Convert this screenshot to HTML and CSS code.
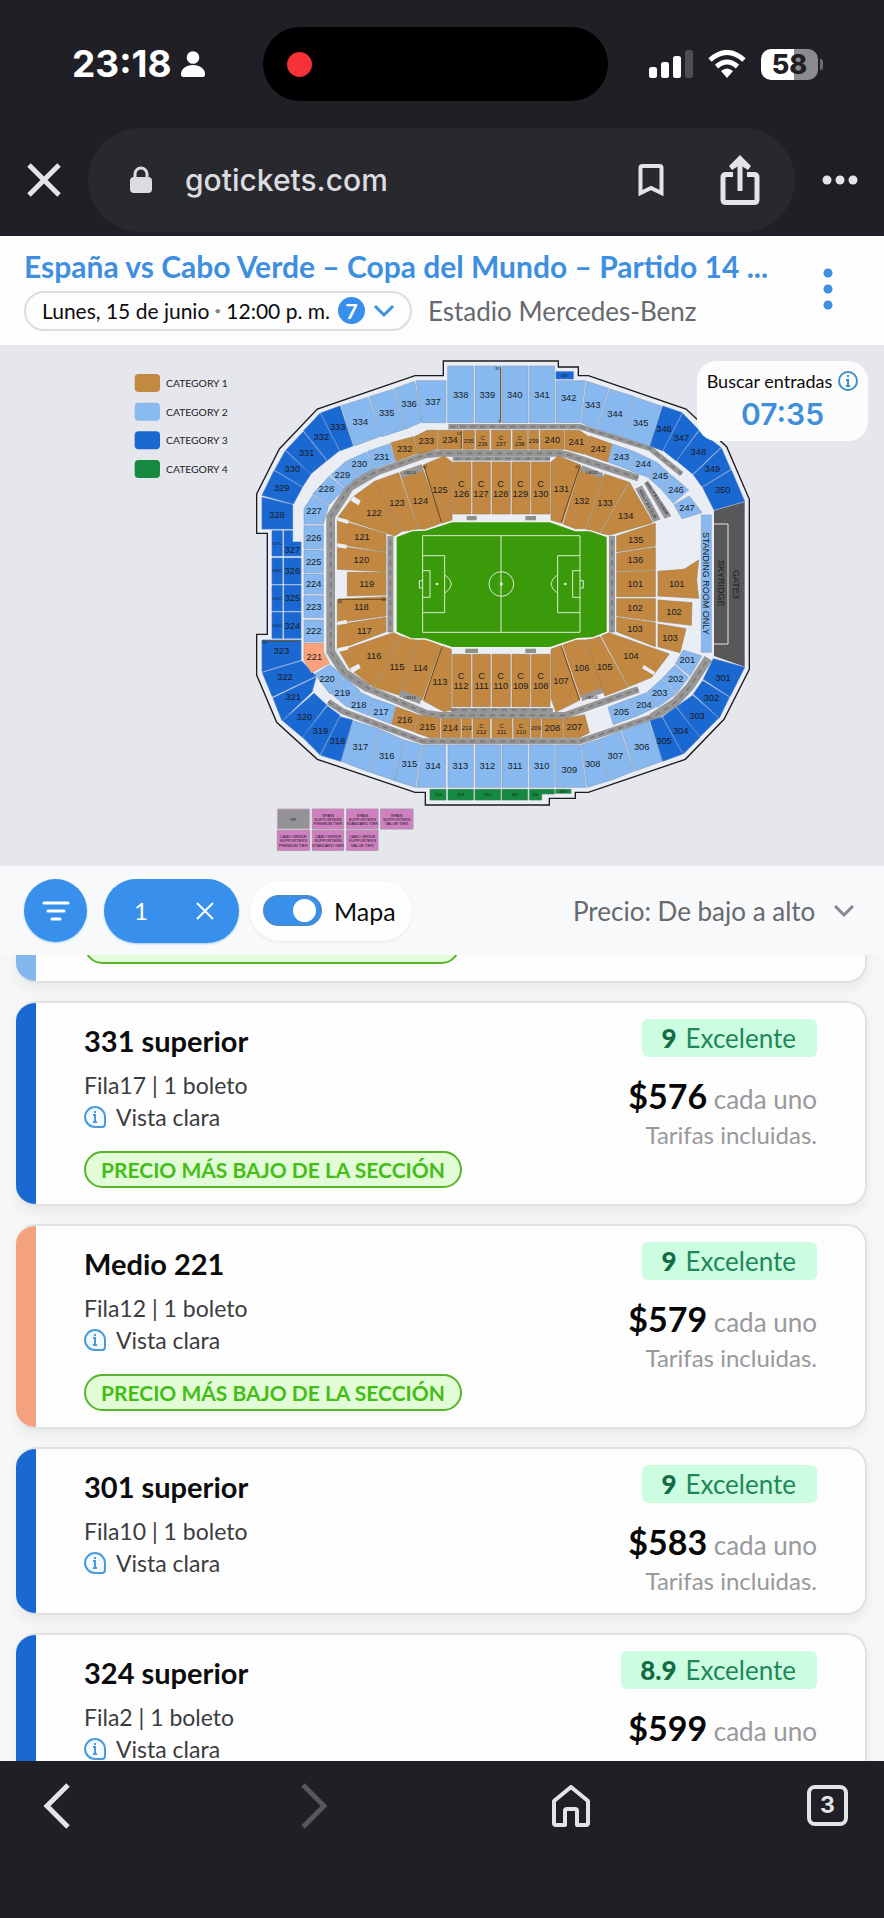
FILE: index.html
```html
<!DOCTYPE html>
<html lang="es">
<head>
<meta charset="utf-8">
<meta name="viewport" content="width=device-width, initial-scale=1">
<title>España vs Cabo Verde</title>
<link rel="stylesheet" href="styles.css">
</head>
<body>
<header class="chrome">
  <div class="status">
    <div class="status-left">
      <span class="clock">23:18</span>
      <svg width="24" height="26" viewBox="0 0 24 26" fill="#fff"><circle cx="12" cy="6.500" r="6.300"/><path d="M0 23c0-5 5-9 12-9s12 4 12 9q0 3-2 3H2q-2 0-2-3z"/></svg>
    </div>
    <div class="island"><span class="rec"></span></div>
    <div class="status-right">
      <svg width="44" height="28" viewBox="0 0 44 28" fill="#fff"><rect y="17" width="8" height="11" rx="2.500"/><rect x="12" y="12" width="8" height="16" rx="2.500"/><rect x="24" y="6" width="8" height="22" rx="2.500"/><rect x="36" width="8" height="28" rx="2.500" fill="#4d4d53"/></svg>
      <svg width="38" height="28" viewBox="0 0 38 28" fill="none" stroke="#fff" stroke-width="5"><path d="M2 10Q19-5 36 10M8.500 16.500q10.500-9 21 0"/><path d="M13 21q6-5 12 0l-6 7z" fill="#fff" stroke="none"/></svg>
      <div class="battery"><span class="battery-level">58</span></div>
    </div>
  </div>
  <div class="address">
    <button class="icon-btn" aria-label="Cerrar"><svg width="34" height="34" viewBox="0 0 34 34" stroke="#e4e4e6" stroke-width="5"><path d="M2 2l30 30M32 2L2 32"/></svg></button>
    <div class="url-pill">
      <svg width="22" height="28" viewBox="0 0 22 28"><rect y="11" width="22" height="16" rx="4" fill="#dcdcdf"/><path d="M5 13V8a6 6 0 0 1 12 0v5" fill="none" stroke="#dcdcdf" stroke-width="3"/></svg>
      <span class="url">gotickets.com</span>
      <button class="icon-btn" aria-label="Guardar"><svg width="26" height="34" viewBox="0 0 26 34" fill="none" stroke="#e4e4e6" stroke-width="4"><path d="M2.500 30V5q0-2 2-2h17q2 0 2 2v25L13 25z"/></svg></button>
      <button class="icon-btn" aria-label="Compartir"><svg width="40" height="50" viewBox="0 0 40 50" fill="none" stroke="#e4e4e6" stroke-width="5"><path d="M13 19.500H6q-3 0-3 3v22q0 3 3 3h28q3 0 3-3v-22q0-3-3-3h-7M20 36V8"/><path d="M20 0l11 11-3 4-8-5-8 5-3-4z" fill="#e4e4e6" stroke="none"/></svg></button>
    </div>
    <button class="icon-btn" aria-label="Más"><svg width="36" height="10" viewBox="0 0 36 10" fill="#e4e4e6"><circle cx="5" cy="5" r="4.500"/><circle cx="18" cy="5" r="4.500"/><circle cx="31" cy="5" r="4.500"/></svg></button>
  </div>
</header>

<section class="event">
  <div class="event-text">
    <h1 class="event-title">España vs Cabo Verde – Copa del Mundo – Partido 14 ...</h1>
    <div class="event-meta">
      <button class="date-pill">Lunes, 15 de junio <span class="sep">•</span> 12:00 p. m. <span class="count">7</span>
        <svg width="22" height="14" viewBox="0 0 22 14" fill="none" stroke="#3f8fdf" stroke-width="3"><path d="M2 2l9 9 9-9"/></svg>
      </button>
      <span class="venue">Estadio Mercedes-Benz</span>
    </div>
  </div>
  <button class="icon-btn" aria-label="Opciones"><svg width="10" height="42" viewBox="0 0 10 42" fill="#3f8fdf"><circle cx="5" cy="5" r="4.500"/><circle cx="5" cy="21" r="4.500"/><circle cx="5" cy="37" r="4.500"/></svg></button>
</section>

<section class="map">
<svg class="map-svg" viewBox="0 0 2652 1563">
  <g class="legend">
    <rect x="404" y="87" width="76" height="54" rx="12" fill="#c28943"/><text x="498" y="126">CATEGORY 1</text>
    <rect x="404" y="173" width="76" height="54" rx="12" fill="#88b9ef"/><text x="498" y="212">CATEGORY 2</text>
    <rect x="404" y="259" width="76" height="54" rx="12" fill="#1b68d1"/><text x="498" y="298">CATEGORY 3</text>
    <rect x="404" y="345" width="76" height="54" rx="12" fill="#168a41"/><text x="498" y="384">CATEGORY 4</text>
  </g>
  <g transform="translate(720 -15)">
    <path d="M610 63H955V81H1015V107H1045L1338 207 1460 320 1528 478V988L1452 1138 1336 1258 1045 1357H1006V1375H928V1395H556V1357H525L232 1258 110 1147 50 1005V883H82V580H50V462L118 327 232 207 525 107H610Z" fill="#eaedf4" stroke="#1b1b1e" stroke-width="4"/>
    <!-- concourses -->
    <g class="walk">
      <path stroke-width="16" d="M625 260H1020L1230 325 1325 402"/>
      <path stroke-width="20" d="M1195 414L985 345 960 340H600L555 345 400 400"/>
      <path stroke-width="26" d="M410 394L330 440 272 530V935L312 998 385 1045"/>
      <path stroke-width="20" d="M375 1042L560 1120 600 1126H975L1195 1048"/>
      <path stroke-width="12" d="M638 356H930M632 1110H938"/>
      <path stroke-width="18" d="M265 1085L310 1115 548 1204H1020L1240 1130"/>
      <path stroke-width="26" d="M1236 1132L1305 1088 1350 1040 1405 955"/>
      <path stroke-width="18" d="M451 588V877M1116 588V877"/>
    </g>
    <g class="walk-marks">
      <path d="M630 260H1020L1230 325 1325 402M1195 414L985 345 960 340H600L555 345 400 400 330 440 272 530V935L312 998 385 1045 560 1120 600 1126H975L1195 1048"/>
      <path d="M645 356H930M635 1110H938M265 1085L310 1115 548 1204H1020L1240 1130 1305 1088 1350 1040 1405 955M451 600V877M1116 600V877"/>
    </g>
    <!-- category 2 -->
    <g class="c2">
      <path d="M623 78h77v170h-77zM705 78h77v170h-77zM786 78h78v170h-78zM868 78h76v170h-76zM528 122h90v126h-72zM462 146l62-22 21 122-49 22zM388 170l71-22 35 120-68 22zM304 197l80-25 40 116-82 30z"/>
      <path d="M948 122h88l-16 126h-72zM1040 124l66 21-38 123-45-20zM1109 147l75 23-40 120-73-22zM1186 172l78 26-36 120-82-28z"/>
      <path d="M1118 312l66 23-16 55-64-24zM1186 336l66 32-27 44-55-20zM1254 370l42 38-34 38-36-32zM1298 408l48 42-46 40-36-42zM1348 468l38 50-60 18-24-42z"/>
      <path d="M383 334l67-23 16 53-66 24zM320 363l60-27 18 52-40 20zM272 405l46-41 38 44-42 36zM218 462l50-54 44 38-44 48zM218 466l48 30-16 56h-58v-46zM192 557h58v69h-58zM192 630h58v68h-58zM192 702h58v60h-58zM192 767h58v66h-58zM192 840h58v66h-58z"/>
      <path d="M224 1002l46-28 44 38-44 50zM272 1060l44-46 44 38-40 48zM322 1100l38-44 38 19-14 51zM386 1126l14-51 66 23-13 54z"/>
      <path d="M304 1264l36-122 82 26-38 127zM386 1295l38-125 68 30-28 122zM464 1322l30-122 51 15-19 127zM530 1342l18-127h69v127zM624 1215h76v127h-76zM706 1215h76v127h-76zM786 1215h77v127h-77zM868 1215h75v127h-75zM947 1215h73l18 127h-91zM1023 1215l47-15 38 122-66 20zM1072 1200l70-26 40 119-72 29zM1146 1172l80-28 40 120-81 29z"/>
      <path d="M1104 1102l66-26 16 54-66 24zM1172 1076l48-18 30 42-62 30zM1222 1056l42-38 44 44-56 40zM1266 1016l38-40 42 36-36 48zM1306 972l24-42 56 18-36 60zM1384 525h30v412h-30z"/>
    </g>
    <!-- category 3 -->
    <g class="c3">
      <path d="M242 219l58-21 39 120-39 14zM191 272l49-52 58 112-36 29zM138 330l52-55 70 87-48 40zM104 390l32-58 76 71-24 37zM66 466l36-74 85 50-27 50zM66 472l92 22v73H66zM96 572h31v76H96zM132 572h26v34h25v42h-51zM96 654h31v78H96zM132 654h51v78h-51zM96 736h31v77H96zM132 736h51v77h-51zM96 817h31v78H96zM132 817h51v78h-51z"/>
      <path d="M66 900h117v60L66 995zM67 998l118-35 43 45L97 1070zM99 1074l129-62-12 44-90 86zM128 1142l94-82 38 35-73 97zM188 1192l74-94 38 28-60 118zM242 1246l58-116 38 10-36 124z"/>
      <path d="M948 95h52v22h-52zM1268 198l58 20-58 114-38-14zM1328 220l48 50-68 92-38-30zM1378 272l64 50-84 80-48-40zM1444 324l28 64-86 52-26-36zM1474 390l40 94-92 26-34-68z"/>
      <path d="M1230 1142l36-10 62 110-60 22zM1268 1130l40-28 72 90-50 50zM1310 1100l48-34 78 68-56 56zM1360 1062l28-40 80 50-30 62zM1390 1018l30-62 94 26-44 88z"/>
    </g>
    <path class="c5" d="M192 910h58v25l18 35-54 28-22-38z"/>
    <path class="c4" d="M570 1348h48v32h-48zM624 1348h76v32h-76zM705 1348h77v32h-77zM786 1348h77v32h-77zM868 1348h75v14h-38v18h-37zM947 1348h46v12h-46z"/>
    <path d="M1422 512l92-26v494l-92-32z" fill="#585858"/>
    <path d="M1422 552h42v360h-42" fill="none" stroke="#e6e6e8" stroke-width="3"/>
    <!-- category 1 -->
    <g class="c1">
      <path d="M595 271h70v57h-70zM669 271h34v57h-34zM708 271h40v57h-40zM754 271h58v57h-58zM818 271h44v57h-44zM866 271h30v57h-30zM901 271h71v57h-71zM975 271h43l28 19-14 52-57-14zM1048 288l68 24-14 54-68-24zM523 290l39-19h30v57l-58 14zM453 308l67-18 12 50-64 24z"/>
      <path d="M455 1152l13-52 66 24-12 51zM524 1177l12-53 64 12v57h-30zM604 1136h58v57h-58zM666 1136h28v57h-28zM699 1136h51v57h-51zM756 1136h60v57h-60zM821 1136h49v57h-49zM874 1136h28v57h-28zM906 1136h62v57h-62zM971 1136l63-12 14 54-30 15h-47z"/>
      <path d="M638 366h55v156h-55zM698 366h53v156h-53zM756 366h55v156h-55zM816 366h54v156h-54zM874 366h56v156h-56zM550 375l62-27 24 18v174l-30 10zM480 397l64-23 62 174-50 20h-20zM404 424l72-26 58 170-46 6zM404 424l82 150-22 14-170-56 46-62zM292 538l146 44v54l-146-24zM292 618l146 20v57l-146-7zM322 697h116v68l-116 3zM292 778l146-8v58l-146 20zM292 854l146-22v43l-146 55z"/>
      <path d="M298 934l162-56 26 12-84 152-72-54zM404 1042l84-152 44 10-54 166zM480 1064l54-164 22-2 48 20-58 162zM550 1082l56-164 28 10v182l-22 5zM638 943h55v157h-55zM698 943h53v157h-53zM756 943h55v157h-55zM816 943h54v157h-54zM874 943h56v157h-56zM933 928l31-12 56 164-72 36-15-41zM968 915l38-15h30l55 148-69 24zM1038 900l42-10 84 152-70 26zM1084 888l22-10 182 64-53 70-69 28z"/>
      <path d="M1130 832l116 16v72l-116-45zM1130 776h116v68l-116-16zM1130 697l116-5v78h-116zM1130 640l116-18v68l-116 4zM1130 588l116-38v68l-116 18zM1082 580l86-154 70 122-128 37zM1038 568l56-166 71 24-85 152zM970 552l52-170 68 26-54 158h-30zM933 366l22-18 67 27-56 175-33-10z"/>
      <path d="M1254 694l78-6 44-28-6 60 6 55-122-7zM1254 780l102 8-2 68-100-12zM1254 852l84 14-18 72-66-18z"/>
    </g>
    <path d="M482 397l63-23 5 18-64 23zM1026 376l64 24-5 15-63-22zM482 1050l62 22-4 20-62-22zM1024 1066l62-22 4 14-64 26zM1212 430l12-8 70 106-20 8zM1186 446l20-10 56 102-22 8z" fill="#979797"/>
    <path d="M340 468l22 14-6 14-24-14zM292 532l34 8-2 12-32-10zM292 610l28 4v12l-28-4zM292 845l28-6v12l-28 4zM292 925l34-8-2 12-32 8zM330 985l26-14 6 12-24 16zM1206 985l6-10 34 22-6 8z" fill="#eaedf4"/>
    <path d="M664 272v54M782 80v166M552 378l52 168M1020 378l-56 168M552 1078l54-158M1018 1078l-54-158M294 778h144M68 904h114" stroke="#6f4a1b" stroke-width="3" fill="none"/>
    <!-- pitch -->
    <path d="M468 590l48-18 40-2 80-25h294l76 27h44l52 18v286l-46 18-44 2-82 27H636l-80-26-44-1-44-20z" fill="#3a9a09" stroke="#f1f4ee" stroke-width="4"/>
    <g class="pitch-lines">
      <path d="M548 587h472v290H548zM783 587v290M548 647h66v171h-66M548 692h22v80h-22M548 722h-10v22h10M614 704q40 28 0 56M1020 647h-67v171h67M1020 692h-22v80h22M1020 722h10v22h-10M953 704q-40 28 0 56"/>
      <circle cx="784" cy="732" r="37"/>
    </g>
    <g fill="#e8f3e2"><circle cx="784" cy="732" r="5"/><circle cx="591" cy="732" r="4"/><circle cx="976" cy="732" r="4"/></g>
    <path d="M680 528h30v13h-30zM856 528h32v13h-32zM676 926h38v13h-38zM856 926h32v13h-32z" fill="#8d9189"/>
    <g class="num">
      <text x="662" y="164">338</text><text x="742" y="164">339</text><text x="824" y="164">340</text><text x="906" y="164">341</text><text x="986" y="173">342</text><text x="1058" y="195">343</text><text x="1125" y="222">344</text><text x="1202" y="249">345</text><text x="1272" y="267">346</text><text x="1324" y="295">347</text><text x="1375" y="335">348</text><text x="1417" y="386">349</text><text x="1448" y="450">350</text>
      <text x="579" y="186">337</text><text x="507" y="192">336</text><text x="440" y="218">335</text><text x="361" y="245">334</text><text x="293" y="262">333</text><text x="244" y="292">332</text><text x="200" y="338">331</text><text x="157" y="387">330</text><text x="125" y="443">329</text><text x="111" y="525">328</text><text x="157" y="629">327</text><text x="157" y="692">326</text><text x="157" y="773">325</text><text x="157" y="857">324</text><text x="124" y="934">323</text><text x="135" y="1010">322</text><text x="160" y="1070">321</text><text x="193" y="1130">320</text><text x="241" y="1172">319</text><text x="292" y="1202">318</text><text x="361" y="1220">317</text><text x="440" y="1249">316</text><text x="508" y="1273">315</text><text x="579" y="1279">314</text><text x="661" y="1279">313</text><text x="742" y="1279">312</text><text x="825" y="1279">311</text><text x="905" y="1279">310</text><text x="988" y="1289">309</text><text x="1058" y="1273">308</text><text x="1126" y="1247">307</text><text x="1205" y="1221">306</text><text x="1272" y="1202">305</text><text x="1322" y="1172">304</text><text x="1371" y="1129">303</text><text x="1414" y="1074">302</text><text x="1449" y="1014">301</text>
      <text x="630" y="300">234</text><text x="937" y="301">240</text><text x="1009" y="307">241</text><text x="1075" y="327">242</text><text x="1144" y="351">243</text><text x="1210" y="371">244</text><text x="1261" y="407">245</text><text x="1308" y="450">246</text><text x="1341" y="504">247</text><text x="559" y="303">233</text><text x="494" y="327">232</text><text x="425" y="351">231</text><text x="358" y="371">230</text><text x="307" y="405">229</text><text x="259" y="447">228</text><text x="222" y="514">227</text><text x="221" y="593">226</text><text x="221" y="667">225</text><text x="221" y="733">224</text><text x="221" y="801">223</text><text x="221" y="873">222</text><text x="223" y="952">221</text><text x="261" y="1016">220</text><text x="307" y="1060">219</text><text x="356" y="1095">218</text><text x="423" y="1115">217</text><text x="494" y="1140">216</text><text x="562" y="1162">215</text><text x="631" y="1164">214</text><text x="937" y="1164">208</text><text x="1003" y="1161">207</text><text x="1144" y="1116">205</text><text x="1212" y="1095">204</text><text x="1259" y="1060">203</text><text x="1307" y="1018">202</text><text x="1342" y="960">201</text>
      <text x="600" y="449">125</text><text x="541" y="482">124</text><text x="471" y="488">123</text><text x="402" y="520">122</text><text x="366" y="592">121</text><text x="364" y="660">120</text><text x="380" y="733">119</text><text x="364" y="801">118</text><text x="373" y="872">117</text><text x="402" y="947">116</text><text x="471" y="980">115</text><text x="541" y="983">114</text><text x="600" y="1025">113</text><text x="963" y="1024">107</text><text x="1025" y="984">106</text><text x="1094" y="980">105</text><text x="1173" y="948">104</text><text x="1185" y="868">103</text><text x="1185" y="804">102</text><text x="1186" y="731">101</text><text x="1186" y="661">136</text><text x="1187" y="599">135</text><text x="1157" y="528">134</text><text x="1095" y="488">133</text><text x="1025" y="484">132</text><text x="964" y="447">131</text><text x="1310" y="733">101</text><text x="1302" y="816">102</text><text x="1290" y="893">103</text>
      <text x="664" y="431">C</text><text x="664" y="461">126</text><text x="723" y="431">C</text><text x="723" y="461">127</text><text x="782" y="431">C</text><text x="782" y="461">128</text><text x="841" y="431">C</text><text x="841" y="461">129</text><text x="902" y="431">C</text><text x="902" y="461">130</text>
      <text x="663" y="1008">C</text><text x="663" y="1038">112</text><text x="725" y="1008">C</text><text x="725" y="1038">111</text><text x="782" y="1008">C</text><text x="782" y="1038">110</text><text x="842" y="1008">C</text><text x="842" y="1038">109</text><text x="902" y="1008">C</text><text x="902" y="1038">108</text>
    </g>
    <g class="num small">
      <text x="686" y="302">235</text><text x="728" y="293">C</text><text x="728" y="311">236</text><text x="783" y="293">C</text><text x="783" y="311">237</text><text x="839" y="293">C</text><text x="839" y="311">238</text><text x="881" y="302">239</text>
      <text x="680" y="1164">213</text><text x="724" y="1157">C</text><text x="724" y="1175">212</text><text x="785" y="1157">C</text><text x="785" y="1175">211</text><text x="843" y="1157">C</text><text x="843" y="1175">210</text><text x="888" y="1164">209</text>
    </g>
    <g class="num tiny">
      <text x="974" y="107">342</text><text x="595" y="1364">314</text><text x="662" y="1364">313</text><text x="743" y="1364">312</text><text x="825" y="1364">311</text><text x="885" y="1364">310</text><text x="970" y="1355">309</text><text x="111" y="610">327C</text><text x="111" y="692">326C</text><text x="111" y="775">325C</text><text x="111" y="857">324C</text><text x="772" y="86">35</text><text x="778" y="243">1</text><text x="656" y="281">12</text><text x="554" y="380">42</text><text x="1012" y="380">42</text><text x="510" y="396">LB124</text><text x="1056" y="396">LB132</text><text x="510" y="1071">LB114</text><text x="1056" y="1071">LB106</text><text x="74" y="907">24</text><text x="300" y="785">46</text><text x="430" y="778">10</text>
      <text transform="translate(1252 476) rotate(57)">MOLLY B'S LOUNGE</text><text transform="translate(1224 492) rotate(61)">MOLLY B'S CLUB</text>
    </g>
    <g class="num side">
      <text transform="translate(1399 730) rotate(90)">STANDING ROOM ONLY</text><text transform="translate(1442 730) rotate(90)">SKYRIDGE</text><text transform="translate(1488 733) rotate(90)">GATE3</text>
    </g>
    <!-- supporter tiers -->
    <path d="M112 1407h97v60h-97z" fill="#939397" stroke="#c9a9c4" stroke-width="3"/>
    <path d="M217 1407h94v60h-94zM320 1407h94v60h-94zM422 1407h97v60h-97zM112 1471h97v60h-97zM217 1471h94v60h-94zM320 1471h94v60h-94z" fill="#d07fc0" stroke="#b28fb0" stroke-width="3"/>
    <g class="num tiny">
      <text x="160" y="1438">VIP</text>
      <text x="264" y="1425">SPAIN</text><text x="264" y="1438">SUPPORTERS</text><text x="264" y="1451">PREMIUM TIER</text>
      <text x="367" y="1425">SPAIN</text><text x="367" y="1438">SUPPORTERS</text><text x="367" y="1451">STANDARD TIER</text>
      <text x="470" y="1425">SPAIN</text><text x="470" y="1438">SUPPORTERS</text><text x="470" y="1451">VALUE TIER</text>
      <text x="160" y="1489">CABO VERDE</text><text x="160" y="1502">SUPPORTERS</text><text x="160" y="1515">PREMIUM TIER</text>
      <text x="264" y="1489">CABO VERDE</text><text x="264" y="1502">SUPPORTERS</text><text x="264" y="1515">STANDARD TIER</text>
      <text x="367" y="1489">CABO VERDE</text><text x="367" y="1502">SUPPORTERS</text><text x="367" y="1515">VALUE TIER</text>
    </g>
  </g>
</svg>
<div class="timer">
  <div class="timer-label">Buscar entradas <svg width="20" height="20" viewBox="0 0 20 20" fill="none" stroke="#3f8fc9" stroke-width="2"><circle cx="10" cy="10" r="9"/><path d="M8 9h2v6M8 15h4M9 5h2"/></svg></div>
  <div class="timer-value">07:35</div>
</div>
</section>

<section class="toolbar">
  <button class="filter-btn" aria-label="Filtros"><svg width="28" height="20" viewBox="0 0 28 20" stroke="#fff" stroke-width="3" stroke-linecap="round"><path d="M2 2h24M6 10h16M10 18h8"/></svg></button>
  <button class="qty-btn"><span>1</span><svg width="18" height="18" viewBox="0 0 18 18" stroke="#fff" stroke-width="2"><path d="M1 1l16 16M17 1L1 17"/></svg></button>
  <label class="map-toggle"><input class="switch" type="checkbox" checked>Mapa</label>
  <div class="sort">
    <select class="sort-select" aria-label="Ordenar"><option>Precio: De bajo a alto</option></select>
    <svg width="20" height="14" viewBox="0 0 20 14" fill="none" stroke="#85888c" stroke-width="3"><path d="M1 2l9 9 9-9"/></svg>
  </div>
</section>

<main class="list">
  <article class="card card-above light"><span class="tag tag-blank"></span></article>

  <article class="card blue">
    <div class="info">
      <h2 class="seat">331 superior</h2>
      <p class="line">Fila17 | 1 boleto</p>
      <p class="line view"><svg class="i" viewBox="0 0 22 22"><path d="M11 1a10 10 0 1 0 0 20h7q3 0 3-3v-7A10 10 0 0 0 11 1z"/><path d="M9 9h2v7M9 16h4M10 6h2"/></svg>Vista clara</p>
      <span class="tag">PRECIO MÁS BAJO DE LA SECCIÓN</span>
    </div>
    <div class="offer">
      <div class="score"><b>9</b>Excelente</div>
      <div class="price"><strong>$576</strong> cada uno</div>
      <div class="fees">Tarifas incluidas.</div>
    </div>
  </article>

  <article class="card salmon">
    <div class="info">
      <h2 class="seat">Medio 221</h2>
      <p class="line">Fila12 | 1 boleto</p>
      <p class="line view"><svg class="i" viewBox="0 0 22 22"><path d="M11 1a10 10 0 1 0 0 20h7q3 0 3-3v-7A10 10 0 0 0 11 1z"/><path d="M9 9h2v7M9 16h4M10 6h2"/></svg>Vista clara</p>
      <span class="tag">PRECIO MÁS BAJO DE LA SECCIÓN</span>
    </div>
    <div class="offer">
      <div class="score"><b>9</b>Excelente</div>
      <div class="price"><strong>$579</strong> cada uno</div>
      <div class="fees">Tarifas incluidas.</div>
    </div>
  </article>

  <article class="card blue">
    <div class="info">
      <h2 class="seat">301 superior</h2>
      <p class="line">Fila10 | 1 boleto</p>
      <p class="line view"><svg class="i" viewBox="0 0 22 22"><path d="M11 1a10 10 0 1 0 0 20h7q3 0 3-3v-7A10 10 0 0 0 11 1z"/><path d="M9 9h2v7M9 16h4M10 6h2"/></svg>Vista clara</p>
    </div>
    <div class="offer">
      <div class="score"><b>9</b>Excelente</div>
      <div class="price"><strong>$583</strong> cada uno</div>
      <div class="fees">Tarifas incluidas.</div>
    </div>
  </article>

  <article class="card blue">
    <div class="info">
      <h2 class="seat">324 superior</h2>
      <p class="line">Fila2 | 1 boleto</p>
      <p class="line view"><svg class="i" viewBox="0 0 22 22"><path d="M11 1a10 10 0 1 0 0 20h7q3 0 3-3v-7A10 10 0 0 0 11 1z"/><path d="M9 9h2v7M9 16h4M10 6h2"/></svg>Vista clara</p>
    </div>
    <div class="offer">
      <div class="score"><b>8.9</b>Excelente</div>
      <div class="price"><strong>$599</strong> cada uno</div>
    </div>
  </article>
</main>

<nav class="tabbar">
  <button class="icon-btn" aria-label="Atrás"><svg width="28" height="46" viewBox="0 0 28 46" fill="none" stroke="#e4e4e6" stroke-width="5"><path d="M25 2L4 23l21 21"/></svg></button>
  <button class="icon-btn" aria-label="Adelante"><svg width="28" height="46" viewBox="0 0 28 46" fill="none" stroke="#56565b" stroke-width="5"><path d="M3 2l21 21L3 44"/></svg></button>
  <button class="icon-btn" aria-label="Inicio"><svg width="38" height="42" viewBox="0 0 38 42" fill="none" stroke="#e4e4e6" stroke-width="4" stroke-linejoin="round"><path d="M2 16L19 2l17 14v22q0 2-2 2h-9V26q0-2-2-2h-8q-2 0-2 2v14H4q-2 0-2-2z"/></svg></button>
  <button class="icon-btn tabs" aria-label="Pestañas">3</button>
</nav>
</body>
</html>
```

FILE: styles.css
```css
* { box-sizing: border-box; margin: 0; }
body {
  height: 100vh;
  display: flex;
  flex-direction: column;
  overflow: hidden;
  background: #f6f7f8;
  color: #0c0c0d;
  font-family: Lato, "Liberation Sans", sans-serif;
}
button, select, input { font: inherit; color: inherit; border: 0; background: none; padding: 0; margin: 0; }
svg { display: block; flex: none; }
.icon-btn { display: flex; align-items: center; justify-content: center; flex: none; }

.chrome { background: #201f26; height: 236px; flex: none; font-family: Inter, "Liberation Sans", sans-serif; }
.status { height: 128px; padding: 0 66px 0 72px; display: grid; grid-template-columns: 10fr 345px 11fr; align-items: center; }
.status-left { display: flex; align-items: center; gap: 9px; color: #fff; }
.clock { font-size: 37px; font-weight: 700; line-height: 40px; }
.island { height: 74px; border-radius: 37px; background: #000; display: flex; align-items: center; padding-left: 24px; }
.rec { width: 25px; height: 25px; border-radius: 50%; background: #f43237; }
.status-right { display: flex; align-items: center; justify-content: flex-end; gap: 15px; }
.battery { position: relative; width: 57px; height: 31px; border-radius: 10px; background: linear-gradient(90deg, #fff 58%, #8b8b8f 58%); display: flex; align-items: center; justify-content: center; }
.battery::after { content: ""; position: absolute; right: -5px; top: 10px; width: 3px; height: 11px; border-radius: 0 3px 3px 0; background: #6c6c70; }
.battery-level { font-size: 27px; font-weight: 800; color: #201f26; line-height: 31px; }
.address { display: flex; align-items: center; padding: 0 26px 0 27px; gap: 27px; }
.url-pill { flex: 1; height: 104px; border-radius: 52px; background: #28292e; display: flex; align-items: center; padding: 0 35px 0 42px; }
.url { flex: 1; margin-left: 33px; font-size: 30px; font-weight: 500; color: #dcdcdf; }
.url-pill .icon-btn + .icon-btn { margin-left: 56px; }

.event { height: 109px; flex: none; background: #fdfdfe; display: flex; align-items: center; justify-content: space-between; padding: 0 51px 3px 24px; }
.event-title { font-size: 30px; line-height: 36px; font-weight: 700; color: #3f8fdf; white-space: nowrap; }
.event-meta { display: flex; align-items: center; gap: 16px; margin-top: 7px; }
.date-pill { height: 40px; border: 2px solid #dcdddf; border-radius: 20px; padding: 0 15px 0 16px; display: flex; align-items: center; gap: 5px; font-size: 21px; white-space: nowrap; }
.sep { font-size: 12px; color: #85888c; }
.count { width: 27px; height: 27px; margin: 0 3px; border-radius: 50%; background: #3890ec; color: #fff; font-weight: 700; line-height: 27px; text-align: center; }
.venue { font-size: 26px; color: #66696d; white-space: nowrap; }

.map { position: relative; flex: none; background: #e5e7ed; }
.map-svg { width: 100%; height: auto; }
.legend text { font: 31px Lato, sans-serif; fill: #222; }
.walk { fill: none; stroke: #979797; }
.walk-marks { fill: none; stroke: #7a7a7c; stroke-width: 5; stroke-dasharray: 16 14; }
.c1, .c2, .c3, .c4, .c5 { stroke-width: 2; }
.c1 { fill: #c28841; stroke: #a08055; }
.c2 { fill: #87b8f0; stroke: #8ba3c0; }
.c3 { fill: #1a68d2; stroke: #3a76c8; }
.c4 { fill: #14893f; stroke: #3c8458; }
.c5 { fill: #fba27c; stroke: #c9937b; }
.pitch-lines { fill: none; stroke: #dcecd2; stroke-width: 3; }
.num text { font: 28px "Liberation Sans", Arial, sans-serif; fill: #191b21; text-anchor: middle; dominant-baseline: central; }
.small text { font-size: 18px; }
.tiny text { font-size: 12px; }
.side text { font-size: 27px; }
.timer { position: absolute; top: 16px; right: 16px; width: 171px; height: 80px; border-radius: 20px; background: #fcfcfd; display: flex; flex-direction: column; align-items: center; padding-top: 8px; }
.timer-label { display: flex; align-items: center; gap: 6px; font-size: 18px; line-height: 24px; white-space: nowrap; }
.timer-value { font: 600 30px/42px Inter, sans-serif; color: #3f8fd9; }

.toolbar { height: 89px; flex: none; display: flex; align-items: center; padding: 0 30px 0 24px; background: #f8f9fa; }
.filter-btn { width: 63px; height: 63px; border-radius: 50%; background: #3890ec; display: flex; align-items: center; justify-content: center; box-shadow: 0 1px 2px #9ccdf6; }
.qty-btn { width: 135px; height: 64px; margin-left: 17px; border-radius: 32px; background: #3890ec; color: #fff; font-size: 24px; display: flex; align-items: center; justify-content: space-between; padding: 0 25px 0 30px; box-shadow: 0 1px 2px #9ccdf6; }
.map-toggle { height: 60px; margin-left: 11px; padding: 0 16px 0 13px; border-radius: 30px; background: #fefefe; display: flex; align-items: center; gap: 12px; font-size: 25px; box-shadow: 0 1px 3px #e6e7e9; }
.switch { appearance: none; position: relative; width: 59px; height: 31px; border-radius: 16px; background: #3890ec; border: 2px solid #478ccc; }
.switch::after { content: ""; position: absolute; right: 4px; top: 2px; width: 23px; height: 23px; border-radius: 50%; background: #fff; }
.sort { margin-left: auto; display: flex; align-items: center; gap: 18px; }
.sort-select { appearance: none; font-size: 26px; color: #66696d; }

.list { flex: 1; min-height: 0; overflow: hidden; padding: 0 17px 0 16px; display: flex; flex-direction: column; gap: 18px; }
.card { position: relative; flex: none; overflow: hidden; display: flex; justify-content: space-between; padding: 16px 48px 16px 68px; background: #fdfdfd; border: 2px solid #e0e1e2; border-left: 0; border-radius: 20px; box-shadow: 0 6px 12px #e9e9ea; }
.card::before { content: ""; position: absolute; left: 0; top: -2px; bottom: -2px; width: 20px; background: #1a68d2; }
.card.light::before { background: #84b6ee; }
.card.salmon::before { background: #f4a27e; }
.card-above { margin-top: -30px; padding-top: 0; padding-bottom: 17px; }
.info { padding-top: 2px; display: flex; flex-direction: column; align-items: flex-start; }
.seat { font-size: 29px; line-height: 40px; font-weight: 700; }
.line { font-size: 23px; line-height: 32px; color: #3b3c3e; }
.seat + .line { margin-top: 8px; }
.view { display: flex; align-items: center; gap: 10px; }
.i { width: 22px; height: 22px; fill: #f2f9ff; stroke: #4a9bd8; stroke-width: 2; }
.tag { height: 37px; padding: 0 15px; border: 2px solid #57b52c; border-radius: 19px; background: #e2fcd8; color: #45bd17; font-size: 21px; line-height: 33px; font-weight: 700; white-space: nowrap; }
.tag-blank { width: 376px; }
.view + .tag { margin-top: 18px; }
.offer { display: flex; flex-direction: column; align-items: flex-end; color: #98999b; font-size: 26px; }
.score { height: 38px; padding: 0 21px 0 19px; border-radius: 6px; background: #ccfde0; color: #21875a; display: flex; align-items: center; gap: 9px; }
.score b { color: #126b43; font-weight: 900; }
.price { margin-top: 19px; line-height: 40px; white-space: nowrap; }
.price strong { font-size: 34px; font-weight: 700; color: #080808; }
.fees { line-height: 32px; font-size: 24px; }

.tabbar { height: 157px; flex: none; background: #201f26; display: flex; align-items: flex-start; justify-content: space-between; padding: 22px 36px 0; }
.tabbar .icon-btn { width: 41px; height: 46px; }
.tabbar .tabs { height: 41px; border: 4px solid #e4e4e6; border-radius: 8px; color: #e4e4e6; font: 700 23px/33px Inter, sans-serif; margin-top: 2px; }
```
